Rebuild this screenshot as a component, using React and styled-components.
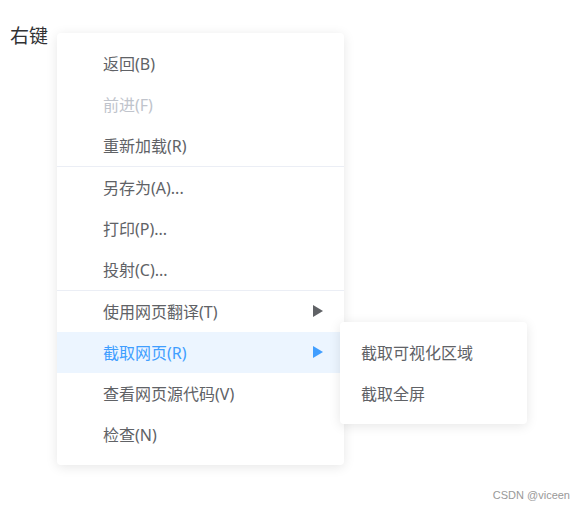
import React from "react";
import styled, { createGlobalStyle } from "styled-components";

const GlobalStyle = createGlobalStyle`
    html, body {
        margin: 0;
        padding: 0;
        background: #fff;
        font-family: "Noto Sans", "Noto Sans CJK SC", sans-serif;
    }
`;

const Page = styled.div`
    position: relative;
    width: 584px;
    height: 509px;
    padding: 24px 0 0 10px;
    box-sizing: border-box;
    overflow: hidden;
`;

const Trigger = styled.div`
    font-size: 19px;
    line-height: 24px;
    color: #303133;
`;

const Menu = styled.ul`
    position: absolute;
    left: ${(p) => p.left}px;
    top: ${(p) => p.top}px;
    width: ${(p) => p.width}px;
    margin: 0;
    padding: 10px 0;
    list-style: none;
    box-sizing: border-box;

    background: #fff;
    border-radius: 4px;
    box-shadow: 0 2px 12px 0 rgba(0, 0, 0, 0.1);
    z-index: ${(p) => (p.sub ? 2 : 1)};
`;

const Item = styled.li`
    position: relative;
    height: 39px;
    padding: 0 21px 2px ${(p) => p.indent}px;

    display: flex;
    align-items: center;
    justify-content: space-between;

    border-top: ${(p) => (p.divided ? "1px solid #ebeef5" : "none")};
    background: ${(p) => (p.active ? "#ecf5ff" : "transparent")};
    color: ${(p) => (p.disabled ? "#c0c4cc" : p.active ? "#409eff" : "#606266")};
    font-size: 16px;
    white-space: nowrap;
`;

const Arrow = styled.span`
    width: 0;
    height: 0;
    border-top: 6px solid transparent;
    border-bottom: 6px solid transparent;
    border-left: 10px solid ${(p) => (p.active ? "#409eff" : "#606266")};
`;

const Watermark = styled.div`
    position: absolute;
    right: 14px;
    bottom: 8px;
    font-family: "Liberation Sans", Arial, sans-serif;
    font-size: 11px;
    color: #999;
`;

const items = [
    { label: "返回(B)" },
    { label: "前进(F)", disabled: true },
    { label: "重新加载(R)" },
    { label: "另存为(A)...", divided: true },
    { label: "打印(P)..." },
    { label: "投射(C)..." },
    { label: "使用网页翻译(T)", divided: true, sub: true },
    { label: "截取网页(R)", sub: true, active: true },
    { label: "查看网页源代码(V)" },
    { label: "检查(N)" },
];

const subItems = ["截取可视化区域", "截取全屏"];

function App() {
    return (
        <Page>
            <GlobalStyle />
            <Trigger>右键</Trigger>

            <Menu left={57} top={33} width={287}>
                {items.map((it) => (
                    <Item
                        key={it.label}
                        indent={46}
                        divided={it.divided}
                        disabled={it.disabled}
                        active={it.active}
                    >
                        <span>{it.label}</span>
                        {it.sub && <Arrow active={it.active} />}
                        {it.active && (
                            <Menu sub left={283} top={-10} width={187}>
                                {subItems.map((s) => (
                                    <Item key={s} indent={21}>
                                        <span>{s}</span>
                                    </Item>
                                ))}
                            </Menu>
                        )}
                    </Item>
                ))}
            </Menu>

            <Watermark>CSDN @viceen</Watermark>
        </Page>
    );
}

export default App;
